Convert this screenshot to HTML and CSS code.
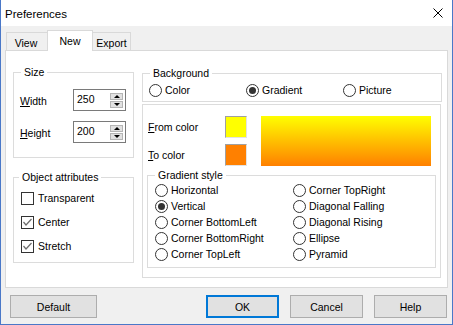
FILE: index.html
```html
<!DOCTYPE html>
<html lang="en">

<head>
  <meta charset="UTF-8" />
  <title>Preferences</title>
  <link rel="stylesheet" href="styles.css">
</head>

<body>
  <div class="window">
    <div class="titlebar">
      <span class="title">Preferences</span>
      <svg class="close" width="10" height="10" viewBox="0 0 10 10">
        <path d="M0.5 0.5 L9.5 9.5 M9.5 0.5 L0.5 9.5" stroke="#000" stroke-width="1" fill="none" />
      </svg>
    </div>

    <div class="tabs">
      <div class="tab tab-view">View</div>
      <div class="tab tab-new selected">New</div>
      <div class="tab tab-export">Export</div>
    </div>

    <div class="panel">
      <div class="left">
        <fieldset class="group size-group">
          <legend>Size</legend>
          <div class="size-rows">
            <div class="size-row">
              <span class="size-label"><u>W</u>idth</span>
              <div class="spin">
                <span class="spin-value">250</span>
                <div class="spin-buttons">
                  <span class="spin-btn up"></span>
                  <span class="spin-btn down"></span>
                </div>
              </div>
            </div>
            <div class="size-row">
              <span class="size-label"><u>H</u>eight</span>
              <div class="spin">
                <span class="spin-value">200</span>
                <div class="spin-buttons">
                  <span class="spin-btn up"></span>
                  <span class="spin-btn down"></span>
                </div>
              </div>
            </div>
          </div>
        </fieldset>

        <fieldset class="group attr-group">
          <legend>Object attributes</legend>
          <div class="checks">
            <div class="check-row"><span class="checkbox"></span>Transparent</div>
            <div class="check-row">
              <span class="checkbox">
                <svg width="11" height="11" viewBox="0 0 11 11"><polyline points="1.5,5 4,8 9.5,2" stroke="#6d6d6d" stroke-width="1.2" fill="none" /></svg>
              </span>Center
            </div>
            <div class="check-row">
              <span class="checkbox">
                <svg width="11" height="11" viewBox="0 0 11 11"><polyline points="1.5,5 4,8 9.5,2" stroke="#6d6d6d" stroke-width="1.2" fill="none" /></svg>
              </span>Stretch
            </div>
          </div>
        </fieldset>
      </div>

      <div class="right">
        <fieldset class="group bg-group">
          <legend>Background</legend>
          <div class="bg-options">
            <div class="radio-row"><span class="radio"></span>Color</div>
            <div class="radio-row"><span class="radio checked"></span>Gradient</div>
            <div class="radio-row"><span class="radio"></span>Picture</div>
          </div>
        </fieldset>

        <div class="color-box">
          <div class="color-top">
            <div class="color-rows">
              <div class="color-row">
                <span class="color-label"><u>F</u>rom color</span>
                <span class="swatch swatch-from"></span>
              </div>
              <div class="color-row">
                <span class="color-label"><u>T</u>o color</span>
                <span class="swatch swatch-to"></span>
              </div>
            </div>
            <div class="preview"></div>
          </div>

          <fieldset class="group style-group">
            <legend>Gradient style</legend>
            <div class="style-grid">
              <div class="radio-row"><span class="radio"></span>Horizontal</div>
              <div class="radio-row"><span class="radio"></span>Corner TopRight</div>
              <div class="radio-row"><span class="radio checked"></span>Vertical</div>
              <div class="radio-row"><span class="radio"></span>Diagonal Falling</div>
              <div class="radio-row"><span class="radio"></span>Corner BottomLeft</div>
              <div class="radio-row"><span class="radio"></span>Diagonal Rising</div>
              <div class="radio-row"><span class="radio"></span>Corner BottomRight</div>
              <div class="radio-row"><span class="radio"></span>Ellipse</div>
              <div class="radio-row"><span class="radio"></span>Corner TopLeft</div>
              <div class="radio-row"><span class="radio"></span>Pyramid</div>
            </div>
          </fieldset>
        </div>
      </div>
    </div>

    <div class="buttons">
      <button class="btn btn-default">Default</button>
      <div class="spacer"></div>
      <button class="btn btn-ok">OK</button>
      <button class="btn">Cancel</button>
      <button class="btn">Help</button>
    </div>
  </div>
</body>

</html>
```

FILE: styles.css
```css
* {
  box-sizing: border-box;
}

html,
body {
  margin: 0;
  padding: 0;
}

body {
  font-family: "Liberation Sans", Arial, sans-serif;
  font-size: 10.5px;
  color: #000;
  background: #f0f0f0;
}

.window {
  width: 453px;
  height: 325px;
  background: #f0f0f0;
  border: 1px solid #4a78c8;
  border-top: none;
  display: flex;
  flex-direction: column;
}

/* title bar */

.titlebar {
  height: 26px;
  flex: none;
  background: #fff;
  display: flex;
  align-items: center;
  padding-left: 4px;
  padding-right: 9px;
}

.title {
  font-size: 11.5px;
  flex: 1;
  padding-top: 1px;
}

.close {
  display: block;
}

/* tabs */

.tabs {
  height: 20px;
  margin-top: 4px;
  padding-left: 5px;
  display: flex;
  align-items: flex-end;
  flex: none;
}

.tab {
  height: 18px;
  border: 1px solid #d9d9d9;
  border-bottom: none;
  background: #f0f0f0;
  display: flex;
  align-items: center;
  justify-content: center;
  padding-top: 2px;
}

.tab-view {
  width: 42px;
  padding-right: 2px;
}

.tab-new {
  width: 46px;
  margin-left: -1px;
  height: 21px;
  margin-bottom: -1px;
  padding-top: 0;
  background: #fff;
  position: relative;
  z-index: 1;
}

.tab-export {
  width: 39px;
  margin-left: -1px;
}

/* panel */

.panel {
  height: 238px;
  margin: 0 4px;
  background: #fff;
  border: 1px solid #d9d9d9;
  padding: 15px 0 0 7px;
  display: grid;
  grid-template-columns: 121px 300px;
  column-gap: 8px;
  align-items: start;
  flex: none;
}

.group {
  margin: 0;
  padding: 0;
  border: 1px solid #dcdcdc;
  min-width: 0;
}

.group legend {
  line-height: 13px;
  height: 13px;
  padding: 0 3px;
  margin-left: 7px;
}

.left {
  display: flex;
  flex-direction: column;
  gap: 13px;
}

/* size */

.size-rows {
  padding: 10px 0 14px 6px;
  display: flex;
  flex-direction: column;
  gap: 10px;
}

.size-row {
  display: flex;
  align-items: center;
  height: 22px;
}

.size-label {
  width: 53px;
  padding-top: 1px;
}

.spin {
  width: 53px;
  height: 22px;
  border: 1px solid #7a7a7a;
  background: #fff;
  display: flex;
  align-items: center;
  padding: 0 2px 0 3px;
}

.spin-value {
  flex: 1;
  padding-bottom: 2px;
}

.spin-buttons {
  display: flex;
  flex-direction: column;
  gap: 1px;
}

.spin-btn {
  width: 13px;
  height: 7px;
  background: #e1e1e1;
  border: 1px solid #b5b5b5;
  display: flex;
  align-items: center;
  justify-content: center;
}

.spin-btn::after {
  content: "";
  width: 0;
  height: 0;
  border-left: 3px solid transparent;
  border-right: 3px solid transparent;
}

.spin-btn.up::after {
  border-bottom: 3px solid #000;
}

.spin-btn.down::after {
  border-top: 3px solid #000;
}

/* object attributes */

.attr-group legend {
  margin-left: 5px;
}

.checks {
  padding: 6px 0 8px 7px;
  display: flex;
  flex-direction: column;
  gap: 8px;
}

.check-row {
  height: 16px;
  display: flex;
  align-items: center;
}

.checkbox {
  width: 13px;
  height: 13px;
  border: 1px solid #333;
  background: #fff;
  margin-right: 4px;
  display: flex;
  align-items: center;
  justify-content: center;
}

.checkbox svg {
  display: block;
}

/* radios */

.radio-row {
  height: 16px;
  display: flex;
  align-items: center;
  white-space: nowrap;
}

.radio {
  width: 13px;
  height: 13px;
  border: 1px solid #333;
  border-radius: 50%;
  background: #fff;
  margin-right: 3px;
  flex: none;
  display: flex;
  align-items: center;
  justify-content: center;
}

.radio.checked::after {
  content: "";
  width: 7px;
  height: 7px;
  border-radius: 50%;
  background: #333;
}

/* background */

.right {
  padding-top: 1px;
  display: flex;
  flex-direction: column;
  gap: 2px;
}

.bg-options {
  padding: 2px 0 3px 6px;
  display: grid;
  grid-template-columns: 97px 97px auto;
}

.color-box {
  width: 299px;
  height: 174px;
  border: 1px solid #dcdcdc;
  padding: 11px 4px 0 5px;
  display: flex;
  flex-direction: column;
  gap: 3px;
}

.color-top {
  display: flex;
  align-items: flex-start;
  gap: 14px;
}

.color-rows {
  display: flex;
  flex-direction: column;
  gap: 6px;
}

.color-row {
  display: flex;
  align-items: center;
  height: 22px;
}

.color-label {
  width: 77px;
}

.swatch {
  width: 22px;
  height: 22px;
  border: 1px solid;
  border-color: #a0a0a0 #e3e3e3 #e3e3e3 #a0a0a0;
}

.swatch-from {
  background: #ffff00;
}

.swatch-to {
  background: #ff8000;
}

.preview {
  width: 170px;
  height: 50px;
  background: linear-gradient(to bottom, #ffff00, #ff8000);
}

.style-group {
  margin: 0 0 0 -1px;
  width: 289px;
}

.style-grid {
  padding: 0 0 5px 7px;
  display: grid;
  grid-template-columns: 138px auto;
}

/* bottom buttons */

.buttons {
  display: flex;
  margin: 7px 5px 0 9px;
  gap: 11px;
}

.spacer {
  flex: 1;
}

.btn {
  font-family: inherit;
  font-size: 10.5px;
  width: 73px;
  height: 23px;
  background: #e1e1e1;
  border: 1px solid #adadad;
  color: #000;
  padding: 0;
  margin: 0;
}

.btn-default {
  width: 87px;
}

.btn-ok {
  border: 2px solid #0078d7;
}
```
